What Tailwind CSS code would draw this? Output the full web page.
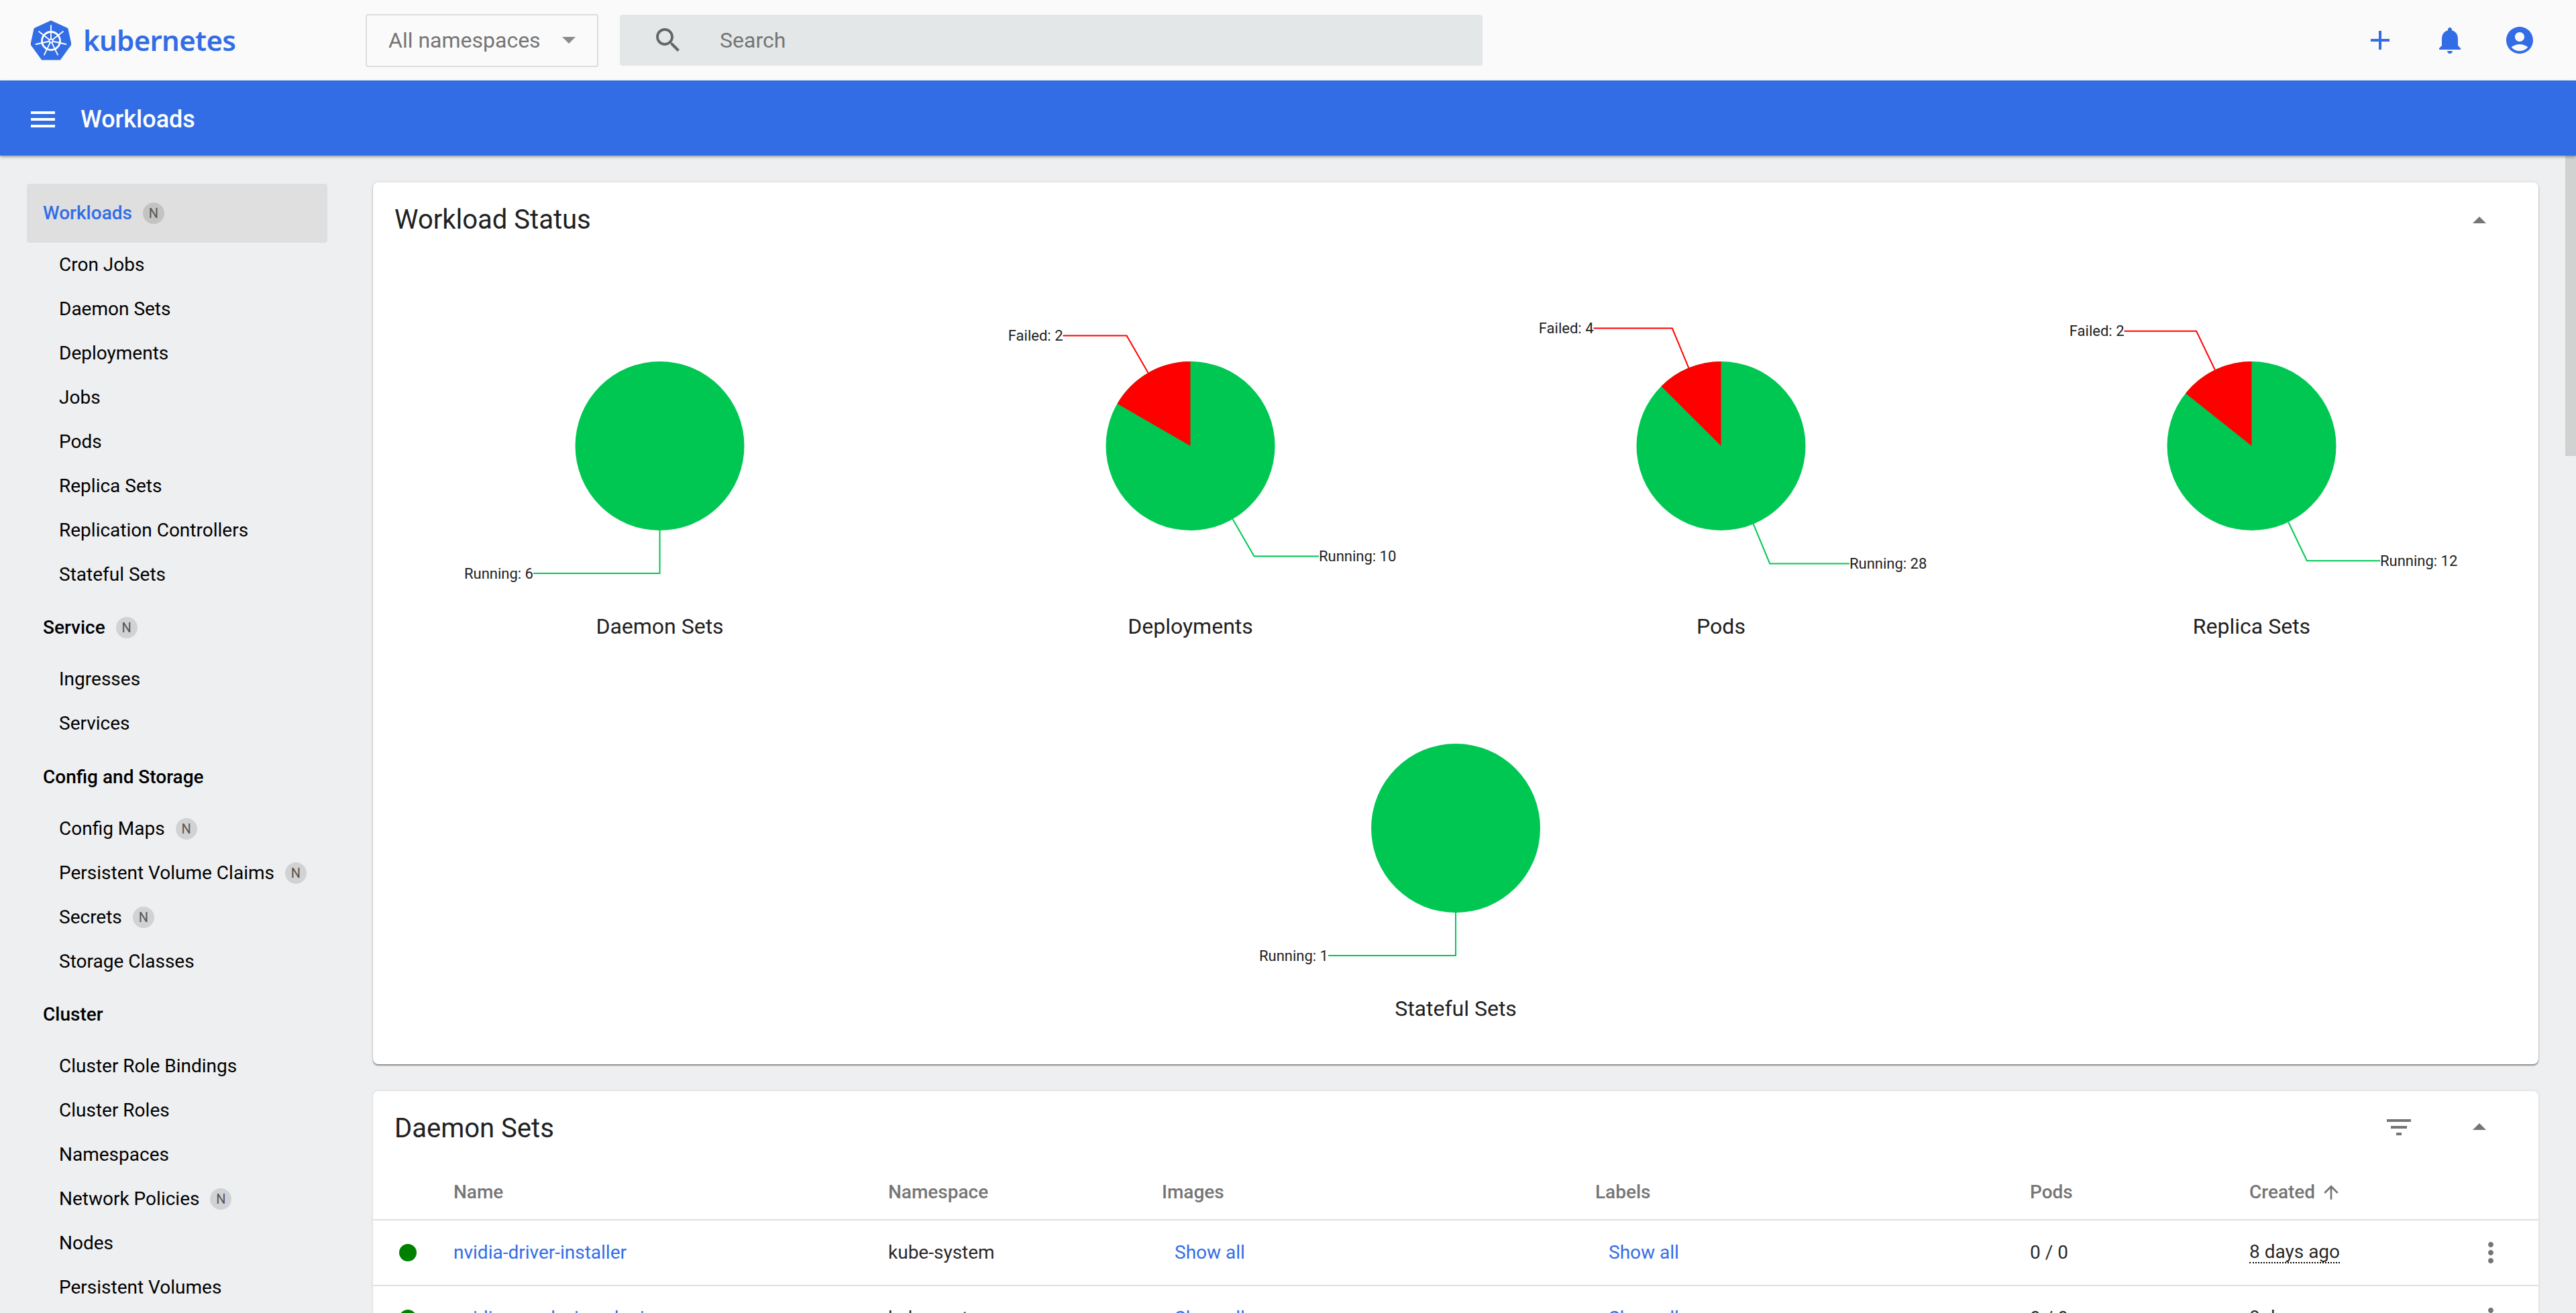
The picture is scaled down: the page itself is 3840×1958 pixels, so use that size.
<!DOCTYPE html>
<html lang="en">
<head>
<meta charset="utf-8">
<title>Kubernetes Dashboard</title>
<script src="https://cdn.jsdelivr.net/npm/@tailwindcss/browser@4"></script>
</head>
<body class="m-0">
<div class="flex h-[1958px] w-[3840px] flex-col overflow-hidden bg-[#eeeff1] font-['Roboto',sans-serif] text-[#212121]">
  <!-- top bar -->
  <header class="flex h-[120px] shrink-0 items-center bg-[#fafafa] pl-[46px] pr-[60px]">
    <div class="flex w-[499px] items-center gap-[18px]">
      <svg viewBox="46 30 60 60" class="h-[60px] w-[60px]">
        <polygon points="76,32 100,43 105,66 89,88 63,88 47,66 52,43" fill="#326de6" stroke="#326de6" stroke-width="3" stroke-linejoin="round"/>
        <g stroke="#fff" fill="none" stroke-linecap="round">
          <circle cx="76" cy="61" r="13.5" stroke-width="2.8"/>
          <path stroke-width="1.8" d="M76 61V38M76 61L94 47M76 61L98.400 66M76 61L86 81.700M76 61L66 81.700M76 61L53.600 66M76 61L58 47"/>
        </g>
        <circle cx="76" cy="61" r="3.500" fill="#fff"/>
        <circle cx="76" cy="61" r="1.700" fill="#326de6"/>
      </svg>
      <span class="font-['Noto_Sans',sans-serif] text-[42px] font-semibold leading-none tracking-[-0.7px] text-[#326de6]">kubernetes</span>
    </div>
    <div class="flex h-[79px] w-[347px] items-center justify-between rounded border-2 border-[#dddddd] pl-[32px] pr-[32px]">
      <span class="text-[32px] text-[#757575]">All namespaces</span>
      <svg viewBox="7 10 10 5" class="h-[10px] w-[20px]"><path d="M7 10l5 5 5-5z" fill="#8c8c8c"/></svg>
    </div>
    <div class="ml-[32px] flex h-[76px] w-[1286px] items-center rounded bg-[#e4e7e8] pl-[48px]">
      <svg viewBox="0 0 24 24" class="h-[48px] w-[48px]"><path fill="#666666" d="M15.5 14h-.79l-.28-.27C15.41 12.59 16 11.11 16 9.5 16 5.91 13.09 3 9.5 3S3 5.91 3 9.5 5.91 16 9.5 16c1.61 0 3.09-.59 4.23-1.57l.27.28v.79l5 4.99L20.49 19l-4.99-5zm-6 0C7.01 14 5 11.990 5 9.5S7.01 5 9.5 5 14 7.01 14 9.5 11.99 14 9.5 14z"/></svg>
      <span class="ml-[53px] text-[32px] text-[#757575]">Search</span>
    </div>
    <div class="ml-auto flex items-center gap-[56px]">
      <svg viewBox="0 0 24 24" class="h-[48px] w-[48px]"><path fill="#326de6" d="M19 13h-6v6h-2v-6H5v-2h6V5h2v6h6v2z"/></svg>
      <svg viewBox="0 0 24 24" class="h-[48px] w-[48px]"><path fill="#326de6" d="M12 22c1.1 0 2-.9 2-2h-4c0 1.1.89 2 2 2zm6-6v-5c0-3.07-1.64-5.64-4.5-6.32V4c0-.83-.67-1.5-1.5-1.5s-1.5.67-1.5 1.5v.68C7.63 5.36 6 7.92 6 11v5l-2 2v1h16v-1l-2-2z"/></svg>
      <svg viewBox="0 0 24 24" class="h-[48px] w-[48px]"><path fill="#326de6" d="M12 2C6.48 2 2 6.48 2 12s4.48 10 10 10 10-4.48 10-10S17.52 2 12 2zm0 4c1.93 0 3.5 1.57 3.5 3.5S13.93 13 12 13s-3.5-1.57-3.5-3.5S10.07 6 12 6zm0 14c-2.03 0-4.43-.82-6.14-2.88C7.55 15.8 9.68 15 12 15s4.45.8 6.14 2.12C16.43 19.18 14.03 20 12 20z"/></svg>
    </div>
  </header>
  <!-- blue bar -->
  <div class="relative z-10 flex h-[112px] shrink-0 items-center bg-[#326de6] pl-[40px] pt-[3px] shadow-[0_2px_4px_rgba(0,0,0,0.35)]">
    <svg viewBox="0 0 24 24" class="h-[48px] w-[48px]"><path fill="#fff" d="M3 18h18v-2H3v2zm0-5h18v-2H3v2zm0-7v2h18V6H3z"/></svg>
    <span class="ml-[32px] text-[36px] font-medium text-white">Workloads</span>
  </div>
  <div class="flex min-h-0 flex-1">
    <!-- sidebar -->
    <nav class="w-[556px] shrink-0 pl-[40px] pr-[68px] pt-[42px] text-[28px] text-black">
      <div class="flex h-[88px] items-center gap-[16px] rounded bg-[#dfdfdf] pl-[24px] font-medium text-[#326de6]">Workloads<span class="flex h-[32px] w-[32px] items-center justify-center rounded-full bg-black/12 text-[20px] font-normal text-[#555555]">N</span></div>
      <div class="flex h-[66px] items-center pl-[48px]">Cron Jobs</div>
      <div class="flex h-[66px] items-center pl-[48px]">Daemon Sets</div>
      <div class="flex h-[66px] items-center pl-[48px]">Deployments</div>
      <div class="flex h-[66px] items-center pl-[48px]">Jobs</div>
      <div class="flex h-[66px] items-center pl-[48px]">Pods</div>
      <div class="flex h-[66px] items-center pl-[48px]">Replica Sets</div>
      <div class="flex h-[66px] items-center pl-[48px]">Replication Controllers</div>
      <div class="flex h-[66px] items-center pl-[48px]">Stateful Sets</div>
      <div class="mt-[2px] flex h-[88px] items-center gap-[16px] pl-[24px] font-medium">Service<span class="flex h-[32px] w-[32px] items-center justify-center rounded-full bg-black/12 text-[20px] font-normal text-[#555555]">N</span></div>
      <div class="flex h-[66px] items-center pl-[48px]">Ingresses</div>
      <div class="flex h-[66px] items-center pl-[48px]">Services</div>
      <div class="mt-[3px] flex h-[88px] items-center pl-[24px] font-medium">Config and Storage</div>
      <div class="flex h-[66px] items-center gap-[16px] pl-[48px]">Config Maps<span class="flex h-[32px] w-[32px] items-center justify-center rounded-full bg-black/12 text-[20px] text-[#555555]">N</span></div>
      <div class="flex h-[66px] items-center gap-[16px] pl-[48px]">Persistent Volume Claims<span class="flex h-[32px] w-[32px] items-center justify-center rounded-full bg-black/12 text-[20px] text-[#555555]">N</span></div>
      <div class="flex h-[66px] items-center gap-[16px] pl-[48px]">Secrets<span class="flex h-[32px] w-[32px] items-center justify-center rounded-full bg-black/12 text-[20px] text-[#555555]">N</span></div>
      <div class="flex h-[66px] items-center pl-[48px]">Storage Classes</div>
      <div class="mt-[2px] flex h-[88px] items-center pl-[24px] font-medium">Cluster</div>
      <div class="flex h-[66px] items-center pl-[48px]">Cluster Role Bindings</div>
      <div class="flex h-[66px] items-center pl-[48px]">Cluster Roles</div>
      <div class="flex h-[66px] items-center pl-[48px]">Namespaces</div>
      <div class="flex h-[66px] items-center gap-[16px] pl-[48px]">Network Policies<span class="flex h-[32px] w-[32px] items-center justify-center rounded-full bg-black/12 text-[20px] text-[#555555]">N</span></div>
      <div class="flex h-[66px] items-center pl-[48px]">Nodes</div>
      <div class="flex h-[66px] items-center pl-[48px]">Persistent Volumes</div>
    </nav>
    <!-- content -->
    <main class="flex min-w-0 flex-1 flex-col gap-[40px] pr-[40px] pt-[40px]">
      <section class="h-[1315px] shrink-0 rounded-lg bg-white shadow-[0_2px_2px_rgba(0,0,0,0.4),0_0_4px_rgba(0,0,0,0.12)]">
        <div class="flex h-[108px] items-center justify-between pl-[32px] pr-[64px]">
          <h2 class="mt-[3px] text-[40px] font-normal">Workload Status</h2>
          <svg viewBox="0 0 24 24" class="mt-[6px] h-[48px] w-[48px]"><path fill="#757575" d="M7 14l5-5 5 5z"/></svg>
        </div>
        <div class="flex flex-wrap justify-center px-[32px]">
          <div class="h-[570px] w-[791px]">
            <svg viewBox="0 0 791 538" class="h-[538px] w-[791px]">
              <circle cx="395.500" cy="285" r="126" fill="#00c752"/>
              <path d="M395.500 411V475H207" fill="none" stroke="#00c752" stroke-width="2"/>
              <text x="207" y="475" text-anchor="end" dominant-baseline="central" class="fill-[#212121] text-[22px]">Running: 6</text>
            </svg>
            <div class="h-[32px] text-center text-[32px] leading-[32px]">Daemon Sets</div>
          </div>
          <div class="h-[570px] w-[791px]">
            <svg viewBox="0 0 791 538" class="h-[538px] w-[791px]">
              <circle cx="395.500" cy="285" r="126" fill="#00c752"/>
              <path d="M395.500 285V159A126 126 0 0 0 286.400 222Z" fill="#ff0000"/>
              <path d="M332.500 175.900L300.500 120.500H205.500" fill="none" stroke="#ff0000" stroke-width="2"/>
              <path d="M458.500 394.100L490.500 449.500H587" fill="none" stroke="#00c752" stroke-width="2"/>
              <text x="205.500" y="120.500" text-anchor="end" dominant-baseline="central" class="fill-[#212121] text-[22px]">Failed: 2</text>
              <text x="587" y="449.500" dominant-baseline="central" class="fill-[#212121] text-[22px]">Running: 10</text>
            </svg>
            <div class="h-[32px] text-center text-[32px] leading-[32px]">Deployments</div>
          </div>
          <div class="h-[570px] w-[791px]">
            <svg viewBox="0 0 791 538" class="h-[538px] w-[791px]">
              <circle cx="395.500" cy="285" r="126" fill="#00c752"/>
              <path d="M395.500 285V159A126 126 0 0 0 306.400 195.900Z" fill="#ff0000"/>
              <path d="M347.300 168.600L322.800 109.500H205.500" fill="none" stroke="#ff0000" stroke-width="2"/>
              <path d="M443.700 401.400L468.200 460.500H587" fill="none" stroke="#00c752" stroke-width="2"/>
              <text x="205.500" y="109.500" text-anchor="end" dominant-baseline="central" class="fill-[#212121] text-[22px]">Failed: 4</text>
              <text x="587" y="460.500" dominant-baseline="central" class="fill-[#212121] text-[22px]">Running: 28</text>
            </svg>
            <div class="h-[32px] text-center text-[32px] leading-[32px]">Pods</div>
          </div>
          <div class="h-[570px] w-[791px]">
            <svg viewBox="0 0 791 538" class="h-[538px] w-[791px]">
              <circle cx="395.500" cy="285" r="126" fill="#00c752"/>
              <path d="M395.500 285V159A126 126 0 0 0 297 206.500Z" fill="#ff0000"/>
              <path d="M340.800 171.500L313.100 113.800H205.500" fill="none" stroke="#ff0000" stroke-width="2"/>
              <path d="M450.200 398.500L477.900 456.200H587" fill="none" stroke="#00c752" stroke-width="2"/>
              <text x="205.500" y="113.800" text-anchor="end" dominant-baseline="central" class="fill-[#212121] text-[22px]">Failed: 2</text>
              <text x="587" y="456.200" dominant-baseline="central" class="fill-[#212121] text-[22px]">Running: 12</text>
            </svg>
            <div class="h-[32px] text-center text-[32px] leading-[32px]">Replica Sets</div>
          </div>
          <div class="h-[570px] w-[791px]">
            <svg viewBox="0 0 791 538" class="h-[538px] w-[791px]">
              <circle cx="395" cy="285" r="126" fill="#00c752"/>
              <path d="M395 411V475H205" fill="none" stroke="#00c752" stroke-width="2"/>
              <text x="205" y="475" text-anchor="end" dominant-baseline="central" class="fill-[#212121] text-[22px]">Running: 1</text>
            </svg>
            <div class="h-[32px] text-center text-[32px] leading-[32px]">Stateful Sets</div>
          </div>
        </div>
      </section>
      <section class="shrink-0 rounded-t-lg bg-white shadow-[0_0_4px_rgba(0,0,0,0.12)]">
        <div class="flex h-[108px] items-center justify-between pl-[32px] pr-[64px]">
          <h2 class="mt-[3px] text-[40px] font-normal">Daemon Sets</h2>
          <div class="flex items-center gap-[72px]">
            <svg viewBox="0 0 24 24" class="h-[48px] w-[48px]"><path fill="#757575" d="M10 18h4v-2h-4v2zM3 6v2h18V6H3zm3 7h12v-2H6v2z"/></svg>
            <svg viewBox="0 0 24 24" class="h-[48px] w-[48px]"><path fill="#757575" d="M7 14l5-5 5 5z"/></svg>
          </div>
        </div>
        <div class="grid h-[85px] grid-cols-[120px_648px_408px_646px_648px_327px_1fr] items-center border-b-2 border-[#e0e0e0] pt-[2px] text-[28px] font-medium text-[#757575]">
          <span></span><span>Name</span><span>Namespace</span><span>Images</span><span>Labels</span><span>Pods</span>
          <span class="flex items-center gap-[8px]">Created<svg viewBox="0 0 24 24" class="h-[32px] w-[32px]"><path fill="#757575" d="M4 12l1.41 1.41L11 7.83V20h2V7.83l5.58 5.59L20 12l-8-8-8 8z"/></svg></span>
        </div>
        <div class="grid h-[98px] grid-cols-[120px_648px_408px_646px_648px_327px_1fr] items-center border-b-2 border-[#e0e0e0] text-[28px] text-black/87">
          <span class="ml-[39px] h-[26px] w-[26px] rounded-full bg-[#008000]"></span>
          <span class="text-[#326de6]">nvidia-driver-installer</span>
          <span>kube-system</span>
          <span class="pl-[19px] text-[#326de6]">Show all</span>
          <span class="pl-[20px] text-[#326de6]">Show all</span>
          <span>0 / 0</span>
          <span class="flex items-center justify-between pr-[47px]"><span class="border-b-2 border-dotted border-black leading-[30px]">8 days ago</span><svg viewBox="0 0 24 24" class="h-[48px] w-[48px]"><path fill="#757575" d="M12 8c1.1 0 2-.9 2-2s-.9-2-2-2-2 .9-2 2 .9 2 2 2zm0 2c-1.1 0-2 .9-2 2s.9 2 2 2 2-.9 2-2-.9-2-2-2zm0 6c-1.1 0-2 .9-2 2s.9 2 2 2 2-.9 2-2-.9-2-2-2z"/></svg></span>
        </div>
        <div class="grid h-[98px] grid-cols-[120px_648px_408px_646px_648px_327px_1fr] items-center border-b-2 border-[#e0e0e0] text-[28px] text-black/87">
          <span class="ml-[39px] h-[26px] w-[26px] rounded-full bg-[#008000]"></span>
          <span class="text-[#326de6]">nvidia-gpu-device-plugin</span>
          <span>kube-system</span>
          <span class="pl-[19px] text-[#326de6]">Show all</span>
          <span class="pl-[20px] text-[#326de6]">Show all</span>
          <span>0 / 0</span>
          <span class="flex items-center justify-between pr-[47px]"><span class="border-b-2 border-dotted border-black leading-[30px]">8 days ago</span><svg viewBox="0 0 24 24" class="h-[48px] w-[48px]"><path fill="#757575" d="M12 8c1.1 0 2-.9 2-2s-.9-2-2-2-2 .9-2 2 .9 2 2 2zm0 2c-1.1 0-2 .9-2 2s.9 2 2 2 2-.9 2-2-.9-2-2-2zm0 6c-1.1 0-2 .9-2 2s.9 2 2 2 2-.9 2-2-.9-2-2-2z"/></svg></span>
        </div>
      </section>
    </main>
    <!-- scrollbar -->
    <div class="w-[16px] shrink-0"><div class="h-[448px] bg-[#d0d2d1]"></div></div>
  </div>
</div>
</body>
</html>
